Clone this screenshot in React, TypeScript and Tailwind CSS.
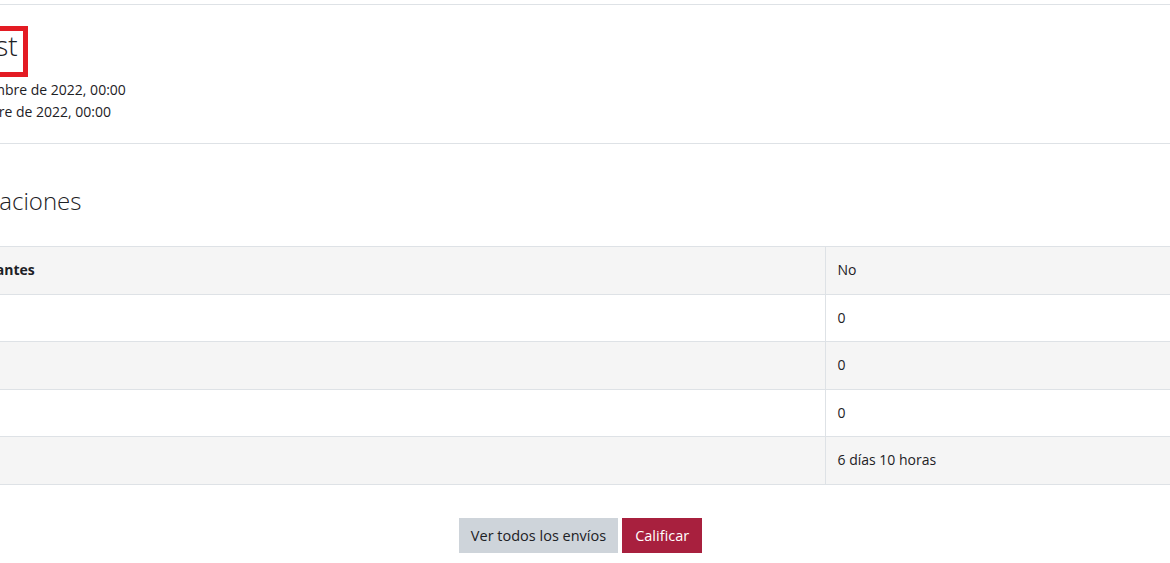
export default function App() {
  const rows: { label: string; value: string; grey: boolean }[] = [
    { label: "Ocultado a los estudiantes", value: "No", grey: true },
    { label: "Participantes", value: "0", grey: false },
    { label: "Enviados", value: "0", grey: true },
    { label: "Pendientes", value: "0", grey: false },
    { label: "Tiempo restante", value: "6 días 10 horas", grey: true },
  ];
  return (
    <div className="w-[1170px] h-[563px] overflow-hidden bg-white text-[#1d2125] font-['Open_Sans',sans-serif] text-[14px] leading-[22px]">
      <div className="-ml-[184px] w-[1529px]">
        <div className="h-[4px]" />
        <div className="border-t border-[#dee2e6]" />
        <div className="pt-[21px] pb-[20px]">
          <div className="ml-[19px] inline-block border-[5px] border-[#e31b23] pl-2 pr-[5px] pb-[12px]">
            <h2 className="text-[28px] leading-[29px] font-light whitespace-nowrap">Tarea de Test</h2>
          </div>
          <div className="mt-[2px] whitespace-nowrap">
            <div className="-ml-[35px]">Apertura: miércoles, 30 de noviembre de 2022, 00:00</div>
            <div className="-ml-[18px]">Cierre: miércoles, 7 de diciembre de 2022, 00:00</div>
          </div>
        </div>
        <div className="border-t border-[#dee2e6]" />
        <h3 className="-ml-[17px] mt-[42px] text-[24px] leading-[29px] font-light whitespace-nowrap">Resumen de calificaciones</h3>
        <div className="mt-[31px] ml-[21px]">
          <table className="w-full border-collapse">
            <tbody>
              {rows.map((r, i) => (
                <tr key={i} className={r.grey ? "bg-[#f5f5f5]" : "bg-white"}>
                  <th className="w-[988px] text-left font-bold px-3 py-3 leading-[22.5px] border-y border-r border-[#dee2e6] whitespace-nowrap">
                    {r.label}
                  </th>
                  <td className="text-left px-3 py-3 leading-[22.5px] border-y border-[#dee2e6] whitespace-nowrap">{r.value}</td>
                </tr>
              ))}
            </tbody>
          </table>
        </div>
        <div className="mt-[33px] flex justify-center gap-1 text-[14.5px]">
          <button className="bg-[#ced4da] text-[#1d2125] px-3 py-[6px] leading-[23px]">Ver todos los envíos</button>
          <button className="bg-[#a8203e] text-white px-[13px] py-[6px] leading-[23px]">Calificar</button>
        </div>
      </div>
    </div>
  );
}
